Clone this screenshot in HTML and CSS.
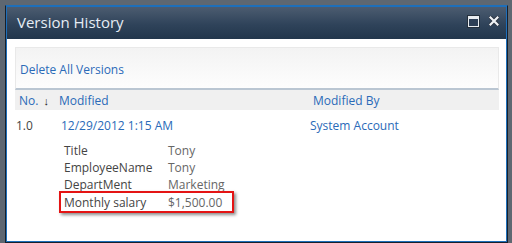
FILE: index.html
```html
<!DOCTYPE html>
<html>
<head>
<meta charset="utf-8">
<link rel="stylesheet" href="styles.css">
</head>
<body>
<div class="dialog">
  <div class="titlebar">
    <span class="title">Version History</span>
    <div class="controls">
      <span class="max"></span>
      <svg class="close" width="10" height="10" viewBox="0 0 10 10">
        <path d="M1.5 1.5 L8.5 8.5 M8.5 1.5 L1.5 8.5" stroke="#2b3340" stroke-width="4" stroke-linecap="square"/>
        <path d="M1.5 1.5 L8.5 8.5 M8.5 1.5 L1.5 8.5" stroke="#eef1f4" stroke-width="2.2" stroke-linecap="square"/>
      </svg>
    </div>
  </div>
  <div class="content">
    <div class="toolbar"><span class="link">Delete All Versions</span></div>
    <div class="header">
      <div class="c-no"><span class="link">No.</span><span class="arrow">↓</span></div>
      <div class="c-mod"><span class="link">Modified</span></div>
      <div class="c-by"><span class="link">Modified By</span></div>
    </div>
    <div class="row">
      <div class="c-no num">1.0</div>
      <div class="c-mod"><span class="link">12/29/2012 1:15 AM</span></div>
      <div class="c-by by"><span class="link">System Account</span></div>
    </div>
    <div class="details">
      <div class="drow"><span class="lbl">Title</span><span class="val">Tony</span></div>
      <div class="drow"><span class="lbl">EmployeeName</span><span class="val">Tony</span></div>
      <div class="drow"><span class="lbl">DepartMent</span><span class="val">Marketing</span></div>
      <div class="drow hl"><span class="lbl">Monthly salary</span><span class="val">$1,500.00</span></div>
    </div>
  </div>
</div>
</body>
</html>
```
FILE: styles.css
```css
html, body { margin: 0; padding: 0; }
body {
  background: #5e6771;
  width: 512px;
  height: 243px;
  overflow: hidden;
  font-family: "Open Sans", "Noto Sans", sans-serif;
  font-size: 12px;
}
.dialog {
  margin: 5px 0 0 5px;
  width: 503px;
  height: 238px;
  box-sizing: border-box;
  border: 1px solid #16202c;
  border-top-color: #1e6fba;
  box-shadow: inset 0 0 0 1px #1e6fba;
  padding: 1px;
  background: #fff;
  display: flex;
  flex-direction: column;
}
.titlebar {
  height: 32px;
  flex: none;
  background: linear-gradient(#4c5c70, #2f435a 55%, #22364c);
  display: flex;
  align-items: center;
  padding: 0 7px 0 10px;
}
.title {
  color: #e6edf5;
  font-size: 15px;
  font-family: "Open Sans", sans-serif;
  flex: 1;
  position: relative;
  top: -1px;
}
.controls { display: flex; align-items: center; gap: 10px; position: relative; top: -2px; }
.max {
  width: 9px; height: 7px;
  border: 1px solid #e8ecf0;
  border-top-width: 3px;
  box-shadow: 0 0 0 1px #25303c;
  background: #2c3e55;
}
.close { display: block; }
.content {
  padding: 8px 7px 0 8px;
  flex: 1;
}
.toolbar {
  height: 43px;
  box-sizing: border-box;
  border: 1px solid #e9e9e9;
  border-bottom: 2px solid #bac6d2;
  background: linear-gradient(#f3f3f3, #fdfdfd);
  display: flex;
  align-items: center;
  padding: 3px 0 0 4px;
}
.link { color: #2a6ab8; }
.header {
  height: 20px;
  background: #f0f0f0;
  display: flex;
  align-items: center;
}
.c-no { width: 44px; padding-left: 4px; box-sizing: border-box; display: flex; align-items: center; }
.c-mod { width: 254px; }
.c-by { flex: 1; }
.arrow { color: #222; margin-left: 5px; font-size: 11px; }
.row {
  display: flex;
  align-items: center;
  height: 28px;
  padding-top: 1px;
}
.row .c-no { padding-left: 1px; width: 46px; }
.row .c-mod { width: 249px; }
.num { color: #444; }
.details {
  padding-left: 49px;
  padding-top: 3px;
  display: flex;
  flex-direction: column;
}
.drow { display: flex; height: 17px; align-items: center; color: #444; }
.lbl { width: 104px; }
.val { color: #666; }
.hl {
  margin-left: -5px;
  padding-left: 3px;
  width: 168px;
  height: 18px;
  border: 2px solid #e41414;
  box-shadow: 2px 2px 3px rgba(0,0,0,0.45);
  position: relative;
  top: -2px;
}
```
